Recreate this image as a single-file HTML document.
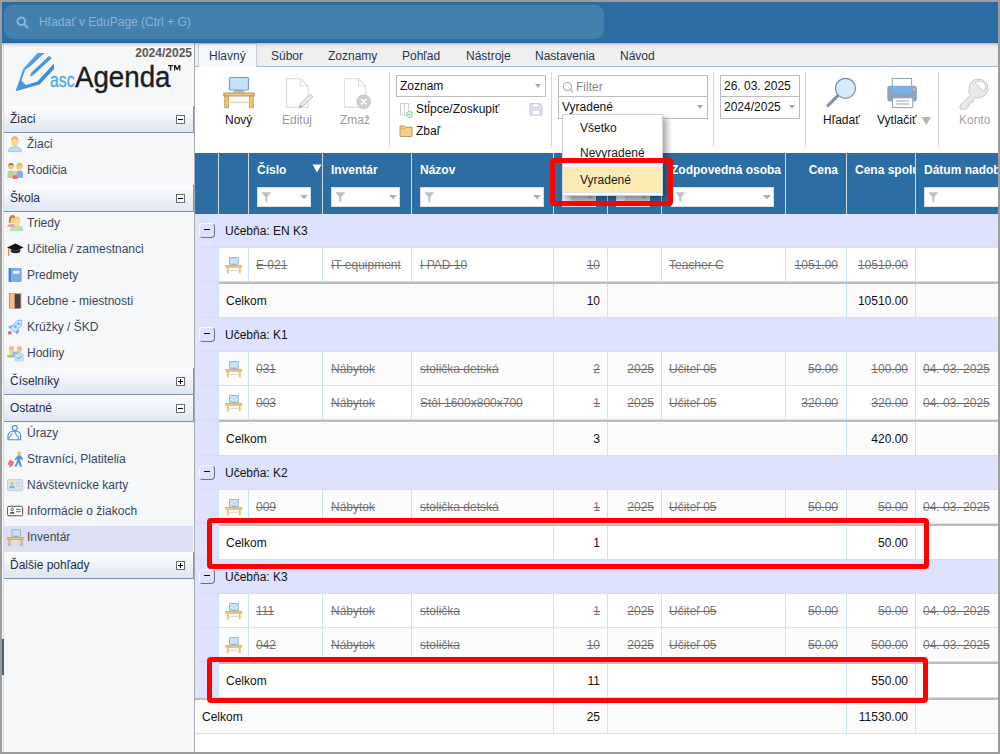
<!DOCTYPE html>
<html><head><meta charset="utf-8">
<style>
*{box-sizing:border-box;margin:0;padding:0}
html,body{width:1000px;height:754px;overflow:hidden;font-family:"Liberation Sans",sans-serif;font-size:12px}
body{position:relative;background:#fff}
.a{position:absolute}
#bT{left:0;top:0;width:1000px;height:2px;background:#9c9c9c}
#bB{left:0;top:752px;width:1000px;height:2px;background:#9c9c9c}
#bL{left:0;top:0;width:2px;height:754px;background:#9c9c9c}
#bR{left:998px;top:0;width:2px;height:754px;background:#9c9c9c}
#hdr{left:2px;top:2px;width:996px;height:41px;background:#2c6ea3;border-bottom:1px solid #2566a0}
#search{left:4px;top:5px;width:600px;height:34px;border-radius:9px;background:#4380ad}
#search .t{left:35px;top:10px;color:#8fb2d2;white-space:nowrap}
#side{left:2px;top:43px;width:193px;height:709px;background:#f5f7f9;border-right:1px solid #a8a9b0}
#sideline{left:3px;top:43px;width:1px;height:709px;background:#dadada}
.sh{position:absolute;left:4px;width:190px;height:27px;background:linear-gradient(#fdfdfe,#dfe6f1);border-bottom:1px solid #8191a9;border-right:1px solid #8595ad;color:#1f2d4a;padding:6px 0 0 6px;white-space:nowrap}
.sh .bx{position:absolute;left:172px;top:9px;width:9px;height:9px;border:1px solid #6f6f6f;background:#fff}
.sh .bx:before{content:"";position:absolute;left:1px;top:3px;width:5px;height:1px;background:#000}
.sh .bx.p:after{content:"";position:absolute;left:3px;top:1px;width:1px;height:5px;background:#000}
.si{position:absolute;left:4px;width:189px;height:26px;color:#3b4659;white-space:nowrap}
.si .tx{position:absolute;left:23px;top:4px}
.si svg{position:absolute;left:3px;top:3px}
#tabs{left:195px;top:43px;width:803px;height:24px;background:#efefef;border-bottom:1px solid #a9bace}
.tab{position:absolute;top:6px;color:#1f3550;white-space:nowrap}
#tb{left:195px;top:67px;width:803px;height:86px;background:#fff}
.sep{position:absolute;width:1px;background:#d8d8d8}
.lbl{position:absolute;white-space:nowrap}
.dis{color:#9a9a9a}
.inp{position:absolute;border:1px solid #bdbdbd;background:#fff;white-space:nowrap;padding:3px 0 0 3px}
.arr{position:absolute;width:0;height:0;border-left:3.5px solid transparent;border-right:3.5px solid transparent;border-top:4px solid #aaa;margin-left:2px}
#thead{left:195px;top:153px;width:803px;height:61px;background:#2c6ea3}
.hs{position:absolute;top:153px;width:1px;height:61px;background:#a8c1d8}
.ht{position:absolute;top:163px;color:#fff;font-weight:bold;white-space:nowrap}
.fb{position:absolute;top:187px;height:20px;background:#fff;border:1px solid #c8d4e0}
.tt{white-space:nowrap}
.mb{width:16px;height:15px;border:1px solid #fafaff;border-right-color:#707078;border-bottom-color:#707078;border-radius:4px;background:transparent}
.mb:before{content:"";position:absolute;left:4px;top:5px;width:6px;height:1.3px;background:#111}
</style></head><body>
<div id="hdr" class="a"></div>
<div id="search" class="a">
 <svg class="a" style="left:12px;top:11px" width="13" height="13" viewBox="0 0 13 13"><circle cx="5.3" cy="5.3" r="3.8" fill="none" stroke="#8fb2d2" stroke-width="2"/><line x1="8.2" y1="8.2" x2="11.5" y2="11.5" stroke="#8fb2d2" stroke-width="2.2" stroke-linecap="round"/></svg>
 <div class="a t">Hľadať v EduPage (Ctrl + G)</div>
</div>
<div id="side" class="a"></div>
<div id="sideline" class="a"></div>
<!-- SIDEBAR -->
<!-- logo -->
<div class="a" style="left:120px;top:46px;width:72px;text-align:right;font-weight:bold;color:#5b5753;font-size:12px">2024/2025</div>
<svg class="a" style="left:0;top:0" width="60" height="100" viewBox="0 0 60 100">
 <defs><linearGradient id="pg" x1="0" y1="0" x2="1" y2="1"><stop offset="0" stop-color="#5fb2e9"/><stop offset="1" stop-color="#2c7dd0"/></linearGradient></defs>
 <path fill="url(#pg)" d="M37.6,53 L44.6,53 L30,66.6 L25.2,69.8 L21.4,80.8 L26,85 L37.4,81.6 L54,63.4 L54,69 L39.6,84.4 L15.6,91.2 L23.4,68.4 Z"/>
 <path fill="url(#pg)" d="M49.2,55.8 L51.6,58.2 L32.4,75.8 L30,76.4 L31.4,72.4 Z"/>
</svg>
<div class="a" style="left:50px;top:69px;font-size:20px;color:#55a8e2;white-space:nowrap;-webkit-text-stroke:0.3px #55a8e2;transform:scaleX(0.79);transform-origin:0 0">asc</div>
<div class="a" style="left:75px;top:61px;font-size:29px;color:#1e1e1e;white-space:nowrap;transform:scaleX(0.955);transform-origin:0 0;-webkit-text-stroke:0.4px #1e1e1e">Agenda</div>
<svg class="a" style="left:168px;top:65px" width="14" height="6" viewBox="0 0 14 6"><path d="M0,0H5.2V1.3H3.3V5.5H1.9V1.3H0Z M6,0H7.7L9.2,3.2L10.7,0H12.4V5.5H11.1V2.2L9.8,5H8.6L7.3,2.2V5.5H6Z" fill="#222"/></svg>




<div class="sh" style="top:106px">Žiaci<div class="bx"></div></div>
<div class="si" style="top:133px"><svg width="18" height="18" viewBox="0 0 18 18"><path d="M1.3,15.6 Q1.3,10.8 7.8,10.8 Q14.3,10.8 14.3,15.6 Z" fill="#bfe0f8" stroke="#8fbfe6" stroke-width="0.8"/><ellipse cx="7.8" cy="5.6" rx="3.7" ry="4.9" fill="#f7dc84"/><path d="M4.1,5.8 Q3.8,0.3 7.8,0.3 Q11.8,0.3 11.5,5.8 Q10.8,2.6 7.8,3 Q4.8,2.6 4.1,5.8Z" fill="#f0a97a"/></svg><span class="tx">Žiaci</span></div>
<div class="si" style="top:159px"><svg width="18" height="18" viewBox="0 0 18 18"><path d="M0.5,16 L0.5,11 Q0.5,8.5 4,8.5 Q7.5,8.5 7.5,11 L7.5,16Z" fill="#a6d8a8"/><circle cx="4" cy="4.5" r="2.8" fill="#f2c66a"/><path d="M1.2,4.5 Q1.2,1 4,1 Q6.8,1 6.8,4.5 Q6,2.5 4,2.8 Q2,2.5 1.2,4.5Z" fill="#a0643a"/><path d="M9,16 L9,11.5 Q9,8.5 12.5,8.5 Q16,8.5 16,11.5 L16,16Z" fill="#7fb2ee"/><circle cx="12.5" cy="4.8" r="3" fill="#f3cf79"/><path d="M9.3,6 Q9,0.8 12.5,0.8 Q16,0.8 15.7,6 L15,4 Q12.5,2 10,4Z" fill="#e8bb55"/><path d="M5.5,17 L5.5,15 Q5.5,13 8,13 Q10.5,13 10.5,15 L10.5,17Z" fill="#ee6a78"/><circle cx="8" cy="11" r="2" fill="#f3c77a"/></svg><span class="tx">Rodičia</span></div>
<div class="sh" style="top:185px">Škola<div class="bx"></div></div>
<div class="si" style="top:212px"><svg width="18" height="18" viewBox="0 0 18 18"><path d="M0,12 L1.5,9.5 Q3,8.7 7.5,8.7 L7.5,12Z" fill="#f2a0a8"/><ellipse cx="5.3" cy="4.5" rx="2.8" ry="3.8" fill="#f5cf7e"/><path d="M2,8 Q1.2,0 5.5,0 Q8.5,0 8.5,3 L5.5,2.8 Q3.5,4 3.5,8Z" fill="#d08040"/><path d="M3.3,15.6 L4.5,12.5 Q6,11 10,11 Q14,11 15,12.5 L16,15.6Z" fill="#bfe3b8" stroke="#9ccf96" stroke-width="0.6"/><ellipse cx="10" cy="6.8" rx="3" ry="5" fill="#fbdc98"/><path d="M6.8,7.5 Q6.3,1.5 10.2,1.5 Q14,1.5 13.3,7.5 Q12.8,3.8 10,4 Q7.5,3.8 6.8,7.5Z" fill="#f3cd78"/></svg><span class="tx">Triedy</span></div>
<div class="si" style="top:238px"><svg width="18" height="18" viewBox="0 0 18 18"><path d="M0,6.5 L8.5,2.5 L16.5,6.5 L8.5,10Z" fill="#111"/><path d="M3.8,8 L3.8,11 Q8.5,13.5 13.2,11 L13.2,8 L8.5,10Z" fill="#222"/><line x1="1.7" y1="7.2" x2="1.7" y2="13.3" stroke="#d07a3a" stroke-width="1.1"/><circle cx="1.7" cy="13.8" r="0.9" fill="#d9834a"/></svg><span class="tx">Učitelia / zamestnanci</span></div>
<div class="si" style="top:264px"><svg width="18" height="18" viewBox="0 0 18 18"><rect x="1.7" y="1" width="13" height="14" rx="1" fill="#7eaceb"/><rect x="1.7" y="1" width="2.3" height="14" fill="#4f82cf"/><rect x="6" y="3.8" width="6.5" height="3" fill="#f0f6ff"/></svg><span class="tx">Predmety</span></div>
<div class="si" style="top:290px"><svg width="18" height="18" viewBox="0 0 18 18"><rect x="2" y="0.3" width="12.2" height="15.4" fill="#b08068"/><rect x="7.5" y="1.2" width="5.8" height="14" fill="#4a3e47"/><rect x="2.8" y="0.8" width="4.7" height="14.8" fill="#f6bb8c"/></svg><span class="tx">Učebne - miestnosti</span></div>
<div class="si" style="top:316px"><svg width="18" height="18" viewBox="0 0 18 18"><path d="M1.2,7.8 L6,5.8 L8,8 L3,9.8Z" fill="#6aa4e6"/><path d="M9.6,15 L8.3,13.3 L12.2,10 L11.5,14Z" fill="#6aa4e6"/><path d="M15,1 L10.2,1.6 L3,9.5 L8.3,13.5 L14.4,6.6Z" fill="#c4e4fb" stroke="#7aaee6" stroke-width="0.8"/><rect x="1.2" y="12.3" width="3.2" height="3" fill="#ee5a52"/><circle cx="8.4" cy="7.6" r="1.3" fill="#6aa4e6"/><circle cx="11.4" cy="4.6" r="1.2" fill="#6aa4e6"/></svg><span class="tx">Krúžky / ŠKD</span></div>
<div class="si" style="top:342px"><svg width="18" height="18" viewBox="0 0 18 18"><circle cx="4.5" cy="3.5" r="2.5" fill="#f2b98a"/><circle cx="12.5" cy="3.5" r="2.5" fill="#f2b98a"/><path d="M2,5.5 L7,5.5 L6,11 L3,11Z" fill="#f6dc8a"/><path d="M10,5.5 L15,5.5 L14,11 L11,11Z" fill="#f6dc8a"/><rect x="0.3" y="10" width="7" height="2.5" fill="#8bcf8c"/><rect x="5.5" y="6.5" width="6" height="5" fill="#9fb6e6"/><rect x="8" y="9" width="8.3" height="7" rx="1" fill="#c8e4fa" stroke="#9cc6ea" stroke-width="0.6"/><path d="M10,12.5 L11.5,14 L14.5,11" fill="none" stroke="#6a8fc6" stroke-width="1"/></svg><span class="tx">Hodiny</span></div>
<div class="sh" style="top:368px">Číselníky<div class="bx p"></div></div>
<div class="sh" style="top:395px">Ostatné<div class="bx"></div></div>
<div class="si" style="top:422px"><svg width="18" height="18" viewBox="0 0 18 18"><circle cx="7.8" cy="2.9" r="2.5" fill="none" stroke="#4a8fd3" stroke-width="1.1"/><path d="M1,14.8 L1,10.5 Q1.5,6.2 7.8,6 Q13.6,6.2 13.6,10.5 L13.6,14.8Z" fill="none" stroke="#4a8fd3" stroke-width="1.1"/><path d="M7.2,6.2 L10,11 L11.3,11.5 L11.3,14.8 M1.5,13.5 L5.5,8" fill="none" stroke="#4a8fd3" stroke-width="1"/></svg><span class="tx">Úrazy</span></div>
<div class="si" style="top:448px"><svg width="18" height="18" viewBox="0 0 18 18"><circle cx="12.2" cy="2.2" r="1.7" fill="#f0b94f"/><path d="M10.8,4.3 L13.6,4.3 L16.3,8.2 L14.8,9 L13.5,7.4 L13.3,10.3 L15,15.6 L13,15.8 L11.6,11.8 L9.3,15.8 L7.4,15.4 L10,10.2 L10.2,7.6 L8.8,9.2 L7.6,8.3Z" fill="#5a93da"/><rect x="1.3" y="9.3" width="5.2" height="5.6" rx="1" transform="rotate(30 3.9 12.1)" fill="#ee7680"/><circle cx="3" cy="15.5" r="0.8" fill="#8a7ab0"/></svg><span class="tx">Stravníci, Platitelia</span></div>
<div class="si" style="top:474px"><svg width="18" height="18" viewBox="0 0 18 18"><rect x="0.5" y="2.6" width="15.3" height="11" rx="1.3" fill="#d8e4ee" stroke="#b9cadb" stroke-width="0.8"/><circle cx="5" cy="6.3" r="1.6" fill="#f2c14e"/><path d="M2.3,11.2 Q2.3,8.6 5,8.6 Q7.7,8.6 7.7,11.2Z" fill="#7eb6ea"/><rect x="9" y="5.6" width="5" height="1" fill="#b6c8d8"/><rect x="9" y="8.2" width="5" height="1" fill="#b6c8d8"/></svg><span class="tx">Návštevnícke karty</span></div>
<div class="si" style="top:500px"><svg width="18" height="18" viewBox="0 0 18 18"><rect x="0.6" y="3.3" width="15" height="9.5" rx="1.3" fill="#fff" stroke="#505050" stroke-width="1"/><circle cx="5.2" cy="6.3" r="1.3" fill="none" stroke="#505050" stroke-width="0.9"/><path d="M3,10.8 L3,9.4 Q5.2,8.2 7.4,9.4 L7.4,10.8Z" fill="#505050"/><rect x="9" y="5.8" width="4.8" height="0.9" fill="#505050"/><rect x="9" y="8.3" width="4.8" height="0.9" fill="#505050"/></svg><span class="tx">Informácie o žiakoch</span></div>
<div class="si" style="top:526px;background:#dde0f4"><svg width="18" height="18" viewBox="0 0 18 18"><rect x="4.8" y="0.8" width="8.6" height="6.4" fill="#c6e3f8" stroke="#8faac0" stroke-width="0.8"/><rect x="7.5" y="7.2" width="3.5" height="1" fill="#8faac0"/><rect x="0.6" y="8.3" width="16" height="2" fill="#e9c47a" stroke="#b8935a" stroke-width="0.5"/><rect x="1.6" y="10.3" width="2" height="6.5" fill="#e9c47a" stroke="#b8935a" stroke-width="0.4"/><rect x="13.6" y="10.3" width="2" height="6.5" fill="#e9c47a" stroke="#b8935a" stroke-width="0.4"/><rect x="3.6" y="13.5" width="10" height="1" fill="#e6d9be"/></svg><span class="tx">Inventár</span></div>
<div class="sh" style="top:552px">Ďalšie pohľady<div class="bx p"></div></div>
<!-- TABS -->
<div id="tabs" class="a"></div>
<div class="a" style="left:198px;top:43px;width:59px;height:24px;background:#f6f9fc;border:1px solid #c6d1dd;border-bottom:none"></div>
<div class="tab" style="left:209px;top:49px">Hlavný</div>
<div class="tab" style="left:271px;top:49px">Súbor</div>
<div class="tab" style="left:328px;top:49px">Zoznamy</div>
<div class="tab" style="left:402px;top:49px">Pohľad</div>
<div class="tab" style="left:466px;top:49px">Nástroje</div>
<div class="tab" style="left:535px;top:49px">Nastavenia</div>
<div class="tab" style="left:620px;top:49px">Návod</div>

<div class="a" style="left:2px;top:43px;width:996px;height:4px;background:linear-gradient(rgba(60,50,40,0.27),rgba(60,50,40,0.1) 50%,rgba(0,0,0,0))"></div>
<!-- TOOLBAR -->
<div id="tb" class="a"></div>
<!-- Novy -->
<svg class="a" style="left:222px;top:76px" width="34" height="34" viewBox="0 0 34 34">
 <rect x="7.5" y="1.5" width="19" height="12.5" rx="1" fill="#c4e2f8" stroke="#7f9ab4" stroke-width="1.2"/>
 <rect x="13" y="14" width="8" height="1.5" fill="#8aa2b8"/><rect x="11" y="15.3" width="12" height="1.3" fill="#9fb2c4"/>
 <rect x="1.8" y="17" width="30.4" height="3" fill="#edc676" stroke="#b58f50" stroke-width="0.9"/>
 <rect x="2.8" y="20" width="3.6" height="11.8" fill="#edc676" stroke="#b58f50" stroke-width="0.8"/>
 <rect x="27.6" y="20" width="3.6" height="11.8" fill="#edc676" stroke="#b58f50" stroke-width="0.8"/>
 <rect x="6.4" y="25.5" width="21.2" height="1.8" fill="#e8dcc3"/>
</svg>
<div class="lbl" style="left:225px;top:113px;color:#111">Nový</div>
<!-- Edituj -->
<svg class="a" style="left:284px;top:76px" width="32" height="34" viewBox="0 0 32 34">
 <path d="M2.5,2.6 H16.3 L24,10 V31.4 H2.5 Z" fill="#fff" stroke="#dedede" stroke-width="1.2"/>
 <path d="M16.3,2.6 V10 H24" fill="none" stroke="#dedede" stroke-width="1.2"/>
 <path d="M15.5,31.5 L16.3,27.5 L26.3,18.3 L28.8,20.8 L18.8,30.3 Z" fill="#ececec" stroke="#b5b5b5" stroke-width="0.9"/>
 <path d="M15.5,31.5 L16.3,29.3 L17.6,30.6Z" fill="#888"/>
</svg>
<div class="lbl dis" style="left:282px;top:113px">Edituj</div>
<!-- Zmaz -->
<svg class="a" style="left:342px;top:76px" width="32" height="34" viewBox="0 0 32 34">
 <path d="M2.5,2.6 H16.6 L23.7,10 V31.4 H2.5 Z" fill="#fff" stroke="#dedede" stroke-width="1.2"/>
 <path d="M16.6,2.6 V10 H23.7" fill="none" stroke="#dedede" stroke-width="1.2"/>
 <circle cx="21.7" cy="25.7" r="6.9" fill="#d0d0d0" stroke="#c0c0c0" stroke-width="0.8"/>
 <path d="M19,23 L24.4,28.4 M24.4,23 L19,28.4" stroke="#fff" stroke-width="1.6"/>
</svg>
<div class="lbl dis" style="left:340px;top:113px">Zmaž</div>
<div class="sep" style="left:389px;top:72px;height:75px"></div>
<!-- Zoznam select -->
<div class="inp" style="left:396px;top:75px;width:150px;height:22px;padding:3px 0 0 3px;color:#111">Zoznam</div>
<div class="arr" style="left:533px;top:84px"></div>
<svg class="a" style="left:399px;top:102px" width="16" height="16" viewBox="0 0 16 16">
 <rect x="1.5" y="1.5" width="8" height="11.5" fill="#fff" stroke="#c9d1dc" stroke-width="1"/><line x1="5.5" y1="1.5" x2="5.5" y2="13" stroke="#c9d1dc" stroke-width="1"/>
 <circle cx="10.5" cy="12.5" r="2.8" fill="#fff" stroke="#9fd09f" stroke-width="1.2"/><path d="M9,12.5 H12 M10.5,11 V14" stroke="#9fd09f" stroke-width="1"/>
</svg>
<div class="lbl" style="left:416px;top:102px;color:#111">Stĺpce/Zoskupiť</div>
<svg class="a" style="left:529px;top:102px" width="14" height="14" viewBox="0 0 14 14">
 <path d="M1,1.5 H10.5 L13,4 V13 H1Z" fill="#e8e4f4" stroke="#c9c1e2" stroke-width="1"/><rect x="3.5" y="1.5" width="6" height="4" fill="#fff" stroke="#c9c1e2" stroke-width="0.8"/><rect x="3" y="8" width="8" height="5" fill="#fff" stroke="#c9c1e2" stroke-width="0.8"/>
</svg>
<svg class="a" style="left:399px;top:124px" width="15" height="14" viewBox="0 0 15 14">
 <path d="M1,2 H5.5 L6.5,3.3 H13 V12.5 H1Z" fill="#f5cf85" stroke="#b8935a" stroke-width="0.9"/><line x1="1" y1="4.5" x2="6.5" y2="4.5" stroke="#d5ad6a" stroke-width="0.8"/>
</svg>
<div class="lbl" style="left:416px;top:124px;color:#111">Zbaľ</div>
<div class="sep" style="left:551px;top:72px;height:75px"></div>
<!-- filter -->
<div class="inp" style="left:558px;top:75px;width:150px;height:22px"></div>
<svg class="a" style="left:562px;top:81px" width="12" height="12" viewBox="0 0 12 12"><circle cx="5.5" cy="5.5" r="4" fill="none" stroke="#a8a8a8" stroke-width="1.1"/><line x1="8.4" y1="8.4" x2="11" y2="11" stroke="#a8a8a8" stroke-width="1.2"/></svg>
<div class="lbl" style="left:576px;top:80px;color:#8a8a8a">Filter</div>
<div class="inp" style="left:558px;top:96px;width:150px;height:23px;padding:3px 0 0 3px;color:#111">Vyradené</div>
<div class="arr" style="left:695px;top:105px"></div>
<div class="sep" style="left:713px;top:72px;height:75px"></div>
<!-- date -->
<div class="inp" style="left:720px;top:75px;width:80px;height:22px;color:#111">26. 03. 2025</div>
<div class="inp" style="left:720px;top:96px;width:80px;height:23px;padding:3px 0 0 3px;color:#111">2024/2025</div>
<div class="arr" style="left:787px;top:105px"></div>
<div class="sep" style="left:805px;top:72px;height:75px"></div>
<!-- hladat -->
<svg class="a" style="left:824px;top:75px" width="34" height="34" viewBox="0 0 34 34">
 <line x1="4" y1="30.5" x2="13.5" y2="21" stroke="#8798ad" stroke-width="3.2" stroke-linecap="round"/>
 <circle cx="21.5" cy="13.3" r="10" fill="#d5ebfc" stroke="#7d8fa4" stroke-width="1.2"/>
</svg>
<div class="lbl" style="left:823px;top:113px;color:#111">Hľadať</div>
<!-- vytlacit -->
<svg class="a" style="left:885px;top:76px" width="34" height="34" viewBox="0 0 34 34">
 <rect x="7.3" y="2.5" width="19.3" height="8.5" fill="#fff" stroke="#8fa0b6" stroke-width="1"/>
 <rect x="2.3" y="9.8" width="29.5" height="15.8" rx="2.5" fill="#8ea3bd"/>
 <rect x="7.3" y="10" width="19.3" height="7" fill="#7fb0ea"/>
 <circle cx="29" cy="13.5" r="1" fill="#f5d65a"/>
 <rect x="7.5" y="21.8" width="20.3" height="9.8" fill="#fff" stroke="#8fa0b6" stroke-width="1"/>
 <line x1="11" y1="25" x2="24" y2="25" stroke="#9aa8bc" stroke-width="1"/><line x1="11" y1="28" x2="24" y2="28" stroke="#9aa8bc" stroke-width="1"/>
</svg>
<div class="lbl" style="left:877px;top:113px;color:#111">Vytlačiť</div>
<svg class="a" style="left:921px;top:116px" width="11" height="10" viewBox="0 0 11 10"><path d="M0.5,1 H10 L5.25,9Z" fill="#b4b4b4"/></svg>
<div class="sep" style="left:938px;top:72px;height:75px"></div>
<!-- konto -->
<svg class="a" style="left:956px;top:76px" width="36" height="34" viewBox="0 0 36 34">
 <path d="M13.2,13.6 A9.4,9.4 0 1 1 21,21.6 L19.8,22.8 L18.3,21.3 L16.8,22.8 L18,24.8 L15.6,27.2 L14.6,25.8 L13,27.4 L13.6,29.4 L9.2,33.4 Q6.2,35.2 4.4,33 Q2.8,30.8 4.8,28.6 L14.8,18.6 L12.4,16.2Z" fill="#e9e9e9" stroke="#c6c6c6" stroke-width="1"/>
 <path d="M19.2,6.8 A5.6,5.6 0 0 1 27.8,15.4 Z" fill="#fff" stroke="#c6c6c6" stroke-width="1"/>
</svg>
<div class="lbl dis" style="left:959px;top:113px;color:#a3a3a3">Konto</div>

<!-- TABLE -->
<div class="a" style="left:195px;top:153px;width:803px;height:61px;background:#2c6ea3"></div>
<div class="a" style="left:218px;top:153px;width:1px;height:61px;background:#d3d9da"></div>
<div class="a" style="left:248px;top:153px;width:1px;height:61px;background:#d3d9da"></div>
<div class="a" style="left:322px;top:153px;width:1px;height:61px;background:#d3d9da"></div>
<div class="a" style="left:411px;top:153px;width:1px;height:61px;background:#d3d9da"></div>
<div class="a" style="left:553px;top:153px;width:1px;height:61px;background:#d3d9da"></div>
<div class="a" style="left:607px;top:153px;width:1px;height:61px;background:#d3d9da"></div>
<div class="a" style="left:661px;top:153px;width:1px;height:61px;background:#d3d9da"></div>
<div class="a" style="left:785px;top:153px;width:1px;height:61px;background:#d3d9da"></div>
<div class="a" style="left:846px;top:153px;width:1px;height:61px;background:#d3d9da"></div>
<div class="a" style="left:915px;top:153px;width:1px;height:61px;background:#d3d9da"></div>
<div class="a ht" style="left:257px">Číslo</div>
<div class="a ht" style="left:331px">Inventár</div>
<div class="a ht" style="left:420px">Názov</div>
<div class="a ht" style="left:671px">Zodpovedná osoba</div>
<div class="a ht" style="left:855px;width:60px;overflow:hidden">Cena spolu</div>
<div class="a ht" style="left:924px">Dátum nadobudnutia</div>
<div class="a ht" style="right:162px">Cena</div>
<svg class="a" style="left:312px;top:164px" width="10" height="9" viewBox="0 0 10 9"><path d="M0.5,0.5H9.5L5,8.5Z" fill="#fff"/></svg>
<div class="a" style="left:257px;top:187px;width:54px;height:20px;background:#fff;border:1px solid #d6dde5"></div>
<svg class="a" style="left:261px;top:192px" width="11" height="11" viewBox="0 0 11 11"><path d="M0.3,0.3H10.3L6.3,5V10.5L4.3,9V5Z" fill="#c0c0c0"/></svg>
<svg class="a" style="left:300px;top:195px" width="8" height="5" viewBox="0 0 8 5"><path d="M0,0H8L4,4.3Z" fill="#b0b0b0"/></svg>
<div class="a" style="left:331px;top:187px;width:69px;height:20px;background:#fff;border:1px solid #d6dde5"></div>
<svg class="a" style="left:335px;top:192px" width="11" height="11" viewBox="0 0 11 11"><path d="M0.3,0.3H10.3L6.3,5V10.5L4.3,9V5Z" fill="#c0c0c0"/></svg>
<svg class="a" style="left:389px;top:195px" width="8" height="5" viewBox="0 0 8 5"><path d="M0,0H8L4,4.3Z" fill="#b0b0b0"/></svg>
<div class="a" style="left:420px;top:187px;width:124px;height:20px;background:#fff;border:1px solid #d6dde5"></div>
<svg class="a" style="left:424px;top:192px" width="11" height="11" viewBox="0 0 11 11"><path d="M0.3,0.3H10.3L6.3,5V10.5L4.3,9V5Z" fill="#c0c0c0"/></svg>
<svg class="a" style="left:533px;top:195px" width="8" height="5" viewBox="0 0 8 5"><path d="M0,0H8L4,4.3Z" fill="#b0b0b0"/></svg>
<div class="a" style="left:671px;top:187px;width:103px;height:20px;background:#fff;border:1px solid #d6dde5"></div>
<svg class="a" style="left:675px;top:192px" width="11" height="11" viewBox="0 0 11 11"><path d="M0.3,0.3H10.3L6.3,5V10.5L4.3,9V5Z" fill="#c0c0c0"/></svg>
<svg class="a" style="left:763px;top:195px" width="8" height="5" viewBox="0 0 8 5"><path d="M0,0H8L4,4.3Z" fill="#b0b0b0"/></svg>
<div class="a" style="left:924px;top:187px;width:86px;height:20px;background:#fff;border:1px solid #d6dde5"></div>
<svg class="a" style="left:928px;top:192px" width="11" height="11" viewBox="0 0 11 11"><path d="M0.3,0.3H10.3L6.3,5V10.5L4.3,9V5Z" fill="#c0c0c0"/></svg>
<div class="a" style="left:562px;top:187px;width:34px;height:20px;background:linear-gradient(90deg,#f0f0f0 0,#f0f0f0 25%,#d2d2d2 25%);border:1px solid #d6dde5"></div>
<svg class="a" style="left:586px;top:195px" width="8" height="5" viewBox="0 0 8 5"><path d="M0,0H8L4,4.3Z" fill="#b0b0b0"/></svg>
<div class="a" style="left:616px;top:187px;width:34px;height:20px;background:linear-gradient(90deg,#f0f0f0 0,#f0f0f0 25%,#d2d2d2 25%);border:1px solid #d6dde5"></div>
<svg class="a" style="left:640px;top:195px" width="8" height="5" viewBox="0 0 8 5"><path d="M0,0H8L4,4.3Z" fill="#b0b0b0"/></svg>
<div class="a" style="left:195px;top:214px;width:803px;height:34px;background:#dfe2fc;border-bottom:1px solid #c8e3fa"></div>
<div class="a mb" style="left:199px;top:223px"></div>
<div class="a tt" style="left:225px;top:214px;height:35px;line-height:35px;color:#111">Učebňa: EN K3</div>
<div class="a" style="left:195px;top:248px;width:23px;height:34px;background:#dfe2fc;border-bottom:1px solid #c8e3fa"></div>
<div class="a" style="left:218px;top:248px;width:780px;height:34px;background:#fff;border-bottom:1px solid #c8e3fa;border-left:1px solid #c8e3fa"></div>
<div class="a" style="left:248px;top:248px;width:1px;height:34px;background:#c8e3fa"></div>
<div class="a" style="left:322px;top:248px;width:1px;height:34px;background:#c8e3fa"></div>
<div class="a" style="left:411px;top:248px;width:1px;height:34px;background:#c8e3fa"></div>
<div class="a" style="left:553px;top:248px;width:1px;height:34px;background:#c8e3fa"></div>
<div class="a" style="left:607px;top:248px;width:1px;height:34px;background:#c8e3fa"></div>
<div class="a" style="left:661px;top:248px;width:1px;height:34px;background:#c8e3fa"></div>
<div class="a" style="left:785px;top:248px;width:1px;height:34px;background:#c8e3fa"></div>
<div class="a" style="left:846px;top:248px;width:1px;height:34px;background:#c8e3fa"></div>
<div class="a" style="left:915px;top:248px;width:1px;height:34px;background:#c8e3fa"></div>
<svg class="a" style="left:225px;top:257px" width="18" height="17" viewBox="0 0 18 17"><rect x="4.5" y="0.6" width="8.8" height="6.6" fill="#c6e3f8" stroke="#8faac0" stroke-width="0.8"/><rect x="7.4" y="7.2" width="3.2" height="1" fill="#8faac0"/><rect x="0.8" y="8.2" width="16" height="2.1" fill="#e9c47a" stroke="#c39e62" stroke-width="0.5"/><rect x="1.8" y="10.3" width="2" height="6" fill="#e9c47a"/><rect x="13.8" y="10.3" width="2" height="6" fill="#e9c47a"/><rect x="3.8" y="12.8" width="10" height="1.3" fill="#e9dfc8"/></svg>
<div class="a tt" style="left:256px;top:248px;height:35px;line-height:35px;color:#7a7a7a;text-decoration:line-through;text-decoration-color:#6a6a6a">E 021</div>
<div class="a tt" style="left:331px;top:248px;height:35px;line-height:35px;color:#7a7a7a;text-decoration:line-through;text-decoration-color:#6a6a6a">IT equipment</div>
<div class="a tt" style="left:420px;top:248px;height:35px;line-height:35px;color:#7a7a7a;text-decoration:line-through;text-decoration-color:#6a6a6a">I PAD 10</div>
<div class="a tt" style="right:400px;top:248px;height:35px;line-height:35px;color:#7a7a7a;text-decoration:line-through;text-decoration-color:#6a6a6a">10</div>
<div class="a tt" style="left:669px;top:248px;height:35px;line-height:35px;color:#7a7a7a;text-decoration:line-through;text-decoration-color:#6a6a6a">Teacher C</div>
<div class="a tt" style="right:162px;top:248px;height:35px;line-height:35px;color:#7a7a7a;text-decoration:line-through;text-decoration-color:#6a6a6a">1051.00</div>
<div class="a tt" style="right:92px;top:248px;height:35px;line-height:35px;color:#7a7a7a;text-decoration:line-through;text-decoration-color:#6a6a6a">10510.00</div>
<div class="a" style="left:195px;top:282px;width:23px;height:36px;background:#dfe2fc;border-bottom:1px solid #c8e3fa"></div>
<div class="a" style="left:218px;top:282px;width:780px;height:2px;background:#bdbdbd"></div>
<div class="a" style="left:218px;top:284px;width:780px;height:34px;background:#fbfbfb;border-top:1px solid #fff;border-bottom:1px solid #c8e3fa;border-left:1px solid #c8e3fa"></div>
<div class="a" style="left:218px;top:282px;width:1px;height:2px;background:#c8e3fa"></div>
<div class="a" style="left:553px;top:284px;width:1px;height:34px;background:#c8e3fa"></div>
<div class="a" style="left:607px;top:284px;width:1px;height:34px;background:#c8e3fa"></div>
<div class="a" style="left:846px;top:284px;width:1px;height:34px;background:#c8e3fa"></div>
<div class="a" style="left:915px;top:284px;width:1px;height:34px;background:#c8e3fa"></div>
<div class="a tt" style="left:226px;top:284px;height:35px;line-height:35px;color:#111">Celkom</div>
<div class="a tt" style="right:400px;top:284px;height:35px;line-height:35px;color:#111">10</div>
<div class="a tt" style="right:92px;top:284px;height:35px;line-height:35px;color:#111">10510.00</div>
<div class="a" style="left:195px;top:318px;width:803px;height:34px;background:#dfe2fc;border-bottom:1px solid #c8e3fa"></div>
<div class="a mb" style="left:199px;top:327px"></div>
<div class="a tt" style="left:225px;top:318px;height:35px;line-height:35px;color:#111">Učebňa: K1</div>
<div class="a" style="left:195px;top:352px;width:23px;height:34px;background:#dfe2fc;border-bottom:1px solid #c8e3fa"></div>
<div class="a" style="left:218px;top:352px;width:780px;height:34px;background:#fcfcfc;border-bottom:1px solid #c8e3fa;border-left:1px solid #c8e3fa"></div>
<div class="a" style="left:248px;top:352px;width:1px;height:34px;background:#c8e3fa"></div>
<div class="a" style="left:322px;top:352px;width:1px;height:34px;background:#c8e3fa"></div>
<div class="a" style="left:411px;top:352px;width:1px;height:34px;background:#c8e3fa"></div>
<div class="a" style="left:553px;top:352px;width:1px;height:34px;background:#c8e3fa"></div>
<div class="a" style="left:607px;top:352px;width:1px;height:34px;background:#c8e3fa"></div>
<div class="a" style="left:661px;top:352px;width:1px;height:34px;background:#c8e3fa"></div>
<div class="a" style="left:785px;top:352px;width:1px;height:34px;background:#c8e3fa"></div>
<div class="a" style="left:846px;top:352px;width:1px;height:34px;background:#c8e3fa"></div>
<div class="a" style="left:915px;top:352px;width:1px;height:34px;background:#c8e3fa"></div>
<svg class="a" style="left:225px;top:361px" width="18" height="17" viewBox="0 0 18 17"><rect x="4.5" y="0.6" width="8.8" height="6.6" fill="#c6e3f8" stroke="#8faac0" stroke-width="0.8"/><rect x="7.4" y="7.2" width="3.2" height="1" fill="#8faac0"/><rect x="0.8" y="8.2" width="16" height="2.1" fill="#e9c47a" stroke="#c39e62" stroke-width="0.5"/><rect x="1.8" y="10.3" width="2" height="6" fill="#e9c47a"/><rect x="13.8" y="10.3" width="2" height="6" fill="#e9c47a"/><rect x="3.8" y="12.8" width="10" height="1.3" fill="#e9dfc8"/></svg>
<div class="a tt" style="left:256px;top:352px;height:35px;line-height:35px;color:#7a7a7a;text-decoration:line-through;text-decoration-color:#6a6a6a">031</div>
<div class="a tt" style="left:331px;top:352px;height:35px;line-height:35px;color:#7a7a7a;text-decoration:line-through;text-decoration-color:#6a6a6a">Nábytok</div>
<div class="a tt" style="left:420px;top:352px;height:35px;line-height:35px;color:#7a7a7a;text-decoration:line-through;text-decoration-color:#6a6a6a">stolička detská</div>
<div class="a tt" style="right:400px;top:352px;height:35px;line-height:35px;color:#7a7a7a;text-decoration:line-through;text-decoration-color:#6a6a6a">2</div>
<div class="a tt" style="right:346px;top:352px;height:35px;line-height:35px;color:#7a7a7a;text-decoration:line-through;text-decoration-color:#6a6a6a">2025</div>
<div class="a tt" style="left:669px;top:352px;height:35px;line-height:35px;color:#7a7a7a;text-decoration:line-through;text-decoration-color:#6a6a6a">Učiteľ 05</div>
<div class="a tt" style="right:162px;top:352px;height:35px;line-height:35px;color:#7a7a7a;text-decoration:line-through;text-decoration-color:#6a6a6a">50.00</div>
<div class="a tt" style="right:92px;top:352px;height:35px;line-height:35px;color:#7a7a7a;text-decoration:line-through;text-decoration-color:#6a6a6a">100.00</div>
<div class="a tt" style="left:923px;top:352px;height:35px;line-height:35px;color:#7a7a7a;text-decoration:line-through;text-decoration-color:#6a6a6a">04. 03. 2025</div>
<div class="a" style="left:195px;top:386px;width:23px;height:34px;background:#dfe2fc;border-bottom:1px solid #c8e3fa"></div>
<div class="a" style="left:218px;top:386px;width:780px;height:34px;background:#fff;border-bottom:1px solid #c8e3fa;border-left:1px solid #c8e3fa"></div>
<div class="a" style="left:248px;top:386px;width:1px;height:34px;background:#c8e3fa"></div>
<div class="a" style="left:322px;top:386px;width:1px;height:34px;background:#c8e3fa"></div>
<div class="a" style="left:411px;top:386px;width:1px;height:34px;background:#c8e3fa"></div>
<div class="a" style="left:553px;top:386px;width:1px;height:34px;background:#c8e3fa"></div>
<div class="a" style="left:607px;top:386px;width:1px;height:34px;background:#c8e3fa"></div>
<div class="a" style="left:661px;top:386px;width:1px;height:34px;background:#c8e3fa"></div>
<div class="a" style="left:785px;top:386px;width:1px;height:34px;background:#c8e3fa"></div>
<div class="a" style="left:846px;top:386px;width:1px;height:34px;background:#c8e3fa"></div>
<div class="a" style="left:915px;top:386px;width:1px;height:34px;background:#c8e3fa"></div>
<svg class="a" style="left:225px;top:395px" width="18" height="17" viewBox="0 0 18 17"><rect x="4.5" y="0.6" width="8.8" height="6.6" fill="#c6e3f8" stroke="#8faac0" stroke-width="0.8"/><rect x="7.4" y="7.2" width="3.2" height="1" fill="#8faac0"/><rect x="0.8" y="8.2" width="16" height="2.1" fill="#e9c47a" stroke="#c39e62" stroke-width="0.5"/><rect x="1.8" y="10.3" width="2" height="6" fill="#e9c47a"/><rect x="13.8" y="10.3" width="2" height="6" fill="#e9c47a"/><rect x="3.8" y="12.8" width="10" height="1.3" fill="#e9dfc8"/></svg>
<div class="a tt" style="left:256px;top:386px;height:35px;line-height:35px;color:#7a7a7a;text-decoration:line-through;text-decoration-color:#6a6a6a">003</div>
<div class="a tt" style="left:331px;top:386px;height:35px;line-height:35px;color:#7a7a7a;text-decoration:line-through;text-decoration-color:#6a6a6a">Nábytok</div>
<div class="a tt" style="left:420px;top:386px;height:35px;line-height:35px;color:#7a7a7a;text-decoration:line-through;text-decoration-color:#6a6a6a">Stôl 1600x800x700</div>
<div class="a tt" style="right:400px;top:386px;height:35px;line-height:35px;color:#7a7a7a;text-decoration:line-through;text-decoration-color:#6a6a6a">1</div>
<div class="a tt" style="right:346px;top:386px;height:35px;line-height:35px;color:#7a7a7a;text-decoration:line-through;text-decoration-color:#6a6a6a">2025</div>
<div class="a tt" style="left:669px;top:386px;height:35px;line-height:35px;color:#7a7a7a;text-decoration:line-through;text-decoration-color:#6a6a6a">Učiteľ 05</div>
<div class="a tt" style="right:162px;top:386px;height:35px;line-height:35px;color:#7a7a7a;text-decoration:line-through;text-decoration-color:#6a6a6a">320.00</div>
<div class="a tt" style="right:92px;top:386px;height:35px;line-height:35px;color:#7a7a7a;text-decoration:line-through;text-decoration-color:#6a6a6a">320.00</div>
<div class="a tt" style="left:923px;top:386px;height:35px;line-height:35px;color:#7a7a7a;text-decoration:line-through;text-decoration-color:#6a6a6a">04. 03. 2025</div>
<div class="a" style="left:195px;top:420px;width:23px;height:36px;background:#dfe2fc;border-bottom:1px solid #c8e3fa"></div>
<div class="a" style="left:218px;top:420px;width:780px;height:2px;background:#bdbdbd"></div>
<div class="a" style="left:218px;top:422px;width:780px;height:34px;background:#fbfbfb;border-top:1px solid #fff;border-bottom:1px solid #c8e3fa;border-left:1px solid #c8e3fa"></div>
<div class="a" style="left:218px;top:420px;width:1px;height:2px;background:#c8e3fa"></div>
<div class="a" style="left:553px;top:422px;width:1px;height:34px;background:#c8e3fa"></div>
<div class="a" style="left:607px;top:422px;width:1px;height:34px;background:#c8e3fa"></div>
<div class="a" style="left:846px;top:422px;width:1px;height:34px;background:#c8e3fa"></div>
<div class="a" style="left:915px;top:422px;width:1px;height:34px;background:#c8e3fa"></div>
<div class="a tt" style="left:226px;top:422px;height:35px;line-height:35px;color:#111">Celkom</div>
<div class="a tt" style="right:400px;top:422px;height:35px;line-height:35px;color:#111">3</div>
<div class="a tt" style="right:92px;top:422px;height:35px;line-height:35px;color:#111">420.00</div>
<div class="a" style="left:195px;top:456px;width:803px;height:34px;background:#dfe2fc;border-bottom:1px solid #c8e3fa"></div>
<div class="a mb" style="left:199px;top:465px"></div>
<div class="a tt" style="left:225px;top:456px;height:35px;line-height:35px;color:#111">Učebňa: K2</div>
<div class="a" style="left:195px;top:490px;width:23px;height:34px;background:#dfe2fc;border-bottom:1px solid #c8e3fa"></div>
<div class="a" style="left:218px;top:490px;width:780px;height:34px;background:#fcfcfc;border-bottom:1px solid #c8e3fa;border-left:1px solid #c8e3fa"></div>
<div class="a" style="left:248px;top:490px;width:1px;height:34px;background:#c8e3fa"></div>
<div class="a" style="left:322px;top:490px;width:1px;height:34px;background:#c8e3fa"></div>
<div class="a" style="left:411px;top:490px;width:1px;height:34px;background:#c8e3fa"></div>
<div class="a" style="left:553px;top:490px;width:1px;height:34px;background:#c8e3fa"></div>
<div class="a" style="left:607px;top:490px;width:1px;height:34px;background:#c8e3fa"></div>
<div class="a" style="left:661px;top:490px;width:1px;height:34px;background:#c8e3fa"></div>
<div class="a" style="left:785px;top:490px;width:1px;height:34px;background:#c8e3fa"></div>
<div class="a" style="left:846px;top:490px;width:1px;height:34px;background:#c8e3fa"></div>
<div class="a" style="left:915px;top:490px;width:1px;height:34px;background:#c8e3fa"></div>
<svg class="a" style="left:225px;top:499px" width="18" height="17" viewBox="0 0 18 17"><rect x="4.5" y="0.6" width="8.8" height="6.6" fill="#c6e3f8" stroke="#8faac0" stroke-width="0.8"/><rect x="7.4" y="7.2" width="3.2" height="1" fill="#8faac0"/><rect x="0.8" y="8.2" width="16" height="2.1" fill="#e9c47a" stroke="#c39e62" stroke-width="0.5"/><rect x="1.8" y="10.3" width="2" height="6" fill="#e9c47a"/><rect x="13.8" y="10.3" width="2" height="6" fill="#e9c47a"/><rect x="3.8" y="12.8" width="10" height="1.3" fill="#e9dfc8"/></svg>
<div class="a tt" style="left:256px;top:490px;height:35px;line-height:35px;color:#7a7a7a;text-decoration:line-through;text-decoration-color:#6a6a6a">009</div>
<div class="a tt" style="left:331px;top:490px;height:35px;line-height:35px;color:#7a7a7a;text-decoration:line-through;text-decoration-color:#6a6a6a">Nábytok</div>
<div class="a tt" style="left:420px;top:490px;height:35px;line-height:35px;color:#7a7a7a;text-decoration:line-through;text-decoration-color:#6a6a6a">stolička detská</div>
<div class="a tt" style="right:400px;top:490px;height:35px;line-height:35px;color:#7a7a7a;text-decoration:line-through;text-decoration-color:#6a6a6a">1</div>
<div class="a tt" style="right:346px;top:490px;height:35px;line-height:35px;color:#7a7a7a;text-decoration:line-through;text-decoration-color:#6a6a6a">2025</div>
<div class="a tt" style="left:669px;top:490px;height:35px;line-height:35px;color:#7a7a7a;text-decoration:line-through;text-decoration-color:#6a6a6a">Učiteľ 05</div>
<div class="a tt" style="right:162px;top:490px;height:35px;line-height:35px;color:#7a7a7a;text-decoration:line-through;text-decoration-color:#6a6a6a">50.00</div>
<div class="a tt" style="right:92px;top:490px;height:35px;line-height:35px;color:#7a7a7a;text-decoration:line-through;text-decoration-color:#6a6a6a">50.00</div>
<div class="a tt" style="left:923px;top:490px;height:35px;line-height:35px;color:#7a7a7a;text-decoration:line-through;text-decoration-color:#6a6a6a">04. 03. 2025</div>
<div class="a" style="left:195px;top:524px;width:23px;height:36px;background:#dfe2fc;border-bottom:1px solid #c8e3fa"></div>
<div class="a" style="left:218px;top:524px;width:780px;height:2px;background:#bdbdbd"></div>
<div class="a" style="left:218px;top:526px;width:780px;height:34px;background:#fff;border-top:1px solid #fff;border-bottom:1px solid #c8e3fa;border-left:1px solid #c8e3fa"></div>
<div class="a" style="left:218px;top:524px;width:1px;height:2px;background:#c8e3fa"></div>
<div class="a" style="left:553px;top:526px;width:1px;height:34px;background:#c8e3fa"></div>
<div class="a" style="left:607px;top:526px;width:1px;height:34px;background:#c8e3fa"></div>
<div class="a" style="left:846px;top:526px;width:1px;height:34px;background:#c8e3fa"></div>
<div class="a" style="left:915px;top:526px;width:1px;height:34px;background:#c8e3fa"></div>
<div class="a tt" style="left:226px;top:526px;height:35px;line-height:35px;color:#111">Celkom</div>
<div class="a tt" style="right:400px;top:526px;height:35px;line-height:35px;color:#111">1</div>
<div class="a tt" style="right:92px;top:526px;height:35px;line-height:35px;color:#111">50.00</div>
<div class="a" style="left:195px;top:560px;width:803px;height:34px;background:#dfe2fc;border-bottom:1px solid #c8e3fa"></div>
<div class="a mb" style="left:199px;top:569px"></div>
<div class="a tt" style="left:225px;top:560px;height:35px;line-height:35px;color:#111">Učebňa: K3</div>
<div class="a" style="left:195px;top:594px;width:23px;height:34px;background:#dfe2fc;border-bottom:1px solid #c8e3fa"></div>
<div class="a" style="left:218px;top:594px;width:780px;height:34px;background:#fff;border-bottom:1px solid #c8e3fa;border-left:1px solid #c8e3fa"></div>
<div class="a" style="left:248px;top:594px;width:1px;height:34px;background:#c8e3fa"></div>
<div class="a" style="left:322px;top:594px;width:1px;height:34px;background:#c8e3fa"></div>
<div class="a" style="left:411px;top:594px;width:1px;height:34px;background:#c8e3fa"></div>
<div class="a" style="left:553px;top:594px;width:1px;height:34px;background:#c8e3fa"></div>
<div class="a" style="left:607px;top:594px;width:1px;height:34px;background:#c8e3fa"></div>
<div class="a" style="left:661px;top:594px;width:1px;height:34px;background:#c8e3fa"></div>
<div class="a" style="left:785px;top:594px;width:1px;height:34px;background:#c8e3fa"></div>
<div class="a" style="left:846px;top:594px;width:1px;height:34px;background:#c8e3fa"></div>
<div class="a" style="left:915px;top:594px;width:1px;height:34px;background:#c8e3fa"></div>
<svg class="a" style="left:225px;top:603px" width="18" height="17" viewBox="0 0 18 17"><rect x="4.5" y="0.6" width="8.8" height="6.6" fill="#c6e3f8" stroke="#8faac0" stroke-width="0.8"/><rect x="7.4" y="7.2" width="3.2" height="1" fill="#8faac0"/><rect x="0.8" y="8.2" width="16" height="2.1" fill="#e9c47a" stroke="#c39e62" stroke-width="0.5"/><rect x="1.8" y="10.3" width="2" height="6" fill="#e9c47a"/><rect x="13.8" y="10.3" width="2" height="6" fill="#e9c47a"/><rect x="3.8" y="12.8" width="10" height="1.3" fill="#e9dfc8"/></svg>
<div class="a tt" style="left:256px;top:594px;height:35px;line-height:35px;color:#7a7a7a;text-decoration:line-through;text-decoration-color:#6a6a6a">111</div>
<div class="a tt" style="left:331px;top:594px;height:35px;line-height:35px;color:#7a7a7a;text-decoration:line-through;text-decoration-color:#6a6a6a">Nábytok</div>
<div class="a tt" style="left:420px;top:594px;height:35px;line-height:35px;color:#7a7a7a;text-decoration:line-through;text-decoration-color:#6a6a6a">stolička</div>
<div class="a tt" style="right:400px;top:594px;height:35px;line-height:35px;color:#7a7a7a;text-decoration:line-through;text-decoration-color:#6a6a6a">1</div>
<div class="a tt" style="right:346px;top:594px;height:35px;line-height:35px;color:#7a7a7a;text-decoration:line-through;text-decoration-color:#6a6a6a">2025</div>
<div class="a tt" style="left:669px;top:594px;height:35px;line-height:35px;color:#7a7a7a;text-decoration:line-through;text-decoration-color:#6a6a6a">Učiteľ 05</div>
<div class="a tt" style="right:162px;top:594px;height:35px;line-height:35px;color:#7a7a7a;text-decoration:line-through;text-decoration-color:#6a6a6a">50.00</div>
<div class="a tt" style="right:92px;top:594px;height:35px;line-height:35px;color:#7a7a7a;text-decoration:line-through;text-decoration-color:#6a6a6a">50.00</div>
<div class="a tt" style="left:923px;top:594px;height:35px;line-height:35px;color:#7a7a7a;text-decoration:line-through;text-decoration-color:#6a6a6a">04. 03. 2025</div>
<div class="a" style="left:195px;top:628px;width:23px;height:34px;background:#dfe2fc;border-bottom:1px solid #c8e3fa"></div>
<div class="a" style="left:218px;top:628px;width:780px;height:34px;background:#fcfcfc;border-bottom:1px solid #c8e3fa;border-left:1px solid #c8e3fa"></div>
<div class="a" style="left:248px;top:628px;width:1px;height:34px;background:#c8e3fa"></div>
<div class="a" style="left:322px;top:628px;width:1px;height:34px;background:#c8e3fa"></div>
<div class="a" style="left:411px;top:628px;width:1px;height:34px;background:#c8e3fa"></div>
<div class="a" style="left:553px;top:628px;width:1px;height:34px;background:#c8e3fa"></div>
<div class="a" style="left:607px;top:628px;width:1px;height:34px;background:#c8e3fa"></div>
<div class="a" style="left:661px;top:628px;width:1px;height:34px;background:#c8e3fa"></div>
<div class="a" style="left:785px;top:628px;width:1px;height:34px;background:#c8e3fa"></div>
<div class="a" style="left:846px;top:628px;width:1px;height:34px;background:#c8e3fa"></div>
<div class="a" style="left:915px;top:628px;width:1px;height:34px;background:#c8e3fa"></div>
<svg class="a" style="left:225px;top:637px" width="18" height="17" viewBox="0 0 18 17"><rect x="4.5" y="0.6" width="8.8" height="6.6" fill="#c6e3f8" stroke="#8faac0" stroke-width="0.8"/><rect x="7.4" y="7.2" width="3.2" height="1" fill="#8faac0"/><rect x="0.8" y="8.2" width="16" height="2.1" fill="#e9c47a" stroke="#c39e62" stroke-width="0.5"/><rect x="1.8" y="10.3" width="2" height="6" fill="#e9c47a"/><rect x="13.8" y="10.3" width="2" height="6" fill="#e9c47a"/><rect x="3.8" y="12.8" width="10" height="1.3" fill="#e9dfc8"/></svg>
<div class="a tt" style="left:256px;top:628px;height:35px;line-height:35px;color:#7a7a7a;text-decoration:line-through;text-decoration-color:#6a6a6a">042</div>
<div class="a tt" style="left:331px;top:628px;height:35px;line-height:35px;color:#7a7a7a;text-decoration:line-through;text-decoration-color:#6a6a6a">Nábytok</div>
<div class="a tt" style="left:420px;top:628px;height:35px;line-height:35px;color:#7a7a7a;text-decoration:line-through;text-decoration-color:#6a6a6a">stolička</div>
<div class="a tt" style="right:400px;top:628px;height:35px;line-height:35px;color:#7a7a7a;text-decoration:line-through;text-decoration-color:#6a6a6a">10</div>
<div class="a tt" style="right:346px;top:628px;height:35px;line-height:35px;color:#7a7a7a;text-decoration:line-through;text-decoration-color:#6a6a6a">2025</div>
<div class="a tt" style="left:669px;top:628px;height:35px;line-height:35px;color:#7a7a7a;text-decoration:line-through;text-decoration-color:#6a6a6a">Učiteľ 05</div>
<div class="a tt" style="right:162px;top:628px;height:35px;line-height:35px;color:#7a7a7a;text-decoration:line-through;text-decoration-color:#6a6a6a">50.00</div>
<div class="a tt" style="right:92px;top:628px;height:35px;line-height:35px;color:#7a7a7a;text-decoration:line-through;text-decoration-color:#6a6a6a">500.00</div>
<div class="a tt" style="left:923px;top:628px;height:35px;line-height:35px;color:#7a7a7a;text-decoration:line-through;text-decoration-color:#6a6a6a">04. 03. 2025</div>
<div class="a" style="left:195px;top:662px;width:23px;height:36px;background:#dfe2fc;border-bottom:1px solid #c8e3fa"></div>
<div class="a" style="left:218px;top:662px;width:780px;height:2px;background:#bdbdbd"></div>
<div class="a" style="left:218px;top:664px;width:780px;height:34px;background:#fff;border-top:1px solid #fff;border-bottom:1px solid #c8e3fa;border-left:1px solid #c8e3fa"></div>
<div class="a" style="left:218px;top:662px;width:1px;height:2px;background:#c8e3fa"></div>
<div class="a" style="left:553px;top:664px;width:1px;height:34px;background:#c8e3fa"></div>
<div class="a" style="left:607px;top:664px;width:1px;height:34px;background:#c8e3fa"></div>
<div class="a" style="left:846px;top:664px;width:1px;height:34px;background:#c8e3fa"></div>
<div class="a" style="left:915px;top:664px;width:1px;height:34px;background:#c8e3fa"></div>
<div class="a tt" style="left:226px;top:664px;height:35px;line-height:35px;color:#111">Celkom</div>
<div class="a tt" style="right:400px;top:664px;height:35px;line-height:35px;color:#111">11</div>
<div class="a tt" style="right:92px;top:664px;height:35px;line-height:35px;color:#111">550.00</div>
<div class="a" style="left:195px;top:698px;width:803px;height:2px;background:#bdbdbd"></div>
<div class="a" style="left:195px;top:700px;width:803px;height:34px;background:#fbfbfb;border-top:1px solid #fff;border-bottom:1px solid #c8e3fa"></div>
<div class="a" style="left:553px;top:700px;width:1px;height:34px;background:#c8e3fa"></div>
<div class="a" style="left:607px;top:700px;width:1px;height:34px;background:#c8e3fa"></div>
<div class="a" style="left:846px;top:700px;width:1px;height:34px;background:#c8e3fa"></div>
<div class="a" style="left:915px;top:700px;width:1px;height:34px;background:#c8e3fa"></div>
<div class="a tt" style="left:202px;top:700px;height:35px;line-height:35px;color:#111">Celkom</div>
<div class="a tt" style="right:400px;top:700px;height:35px;line-height:35px;color:#111">25</div>
<div class="a tt" style="right:92px;top:700px;height:35px;line-height:35px;color:#111">11530.00</div>
<!-- OVERLAY -->
<div class="a" style="left:562px;top:114px;width:101px;height:82px;background:#fff;border:1px solid #d2d2d2;box-shadow:4px 4px 6px rgba(0,0,0,0.35)"></div>
<div class="a" style="left:563px;top:163px;width:99px;height:5px;background:#eef2f6"></div>
<div class="a" style="left:563px;top:167px;width:99px;height:25px;background:#fcebb2"></div>
<div class="a" style="left:563px;top:192px;width:99px;height:1px;background:#e4e4e4"></div>
<div class="a tt" style="left:580px;top:121px;color:#1a1a1a">Všetko</div>
<div class="a tt" style="left:580px;top:146px;color:#1a1a1a">Nevyradené</div>
<div class="a tt" style="left:580px;top:173px;color:#1a1a1a">Vyradené</div>
<div class="a" style="left:550px;top:158px;width:123px;height:48px;border:5px solid #ff0000;border-radius:4px"></div>
<div class="a" style="left:207px;top:518px;width:722px;height:51px;border:5px solid #ff0000;border-radius:4px"></div>
<div class="a" style="left:207px;top:657px;width:721px;height:46px;border:5px solid #ff0000;border-radius:4px"></div>
<div id="bT" class="a"></div><div id="bB" class="a"></div><div id="bL" class="a"></div><div id="bR" class="a"></div>
<div class="a" style="left:2px;top:639px;width:2px;height:36px;background:#4c6372"></div>

</body></html>
